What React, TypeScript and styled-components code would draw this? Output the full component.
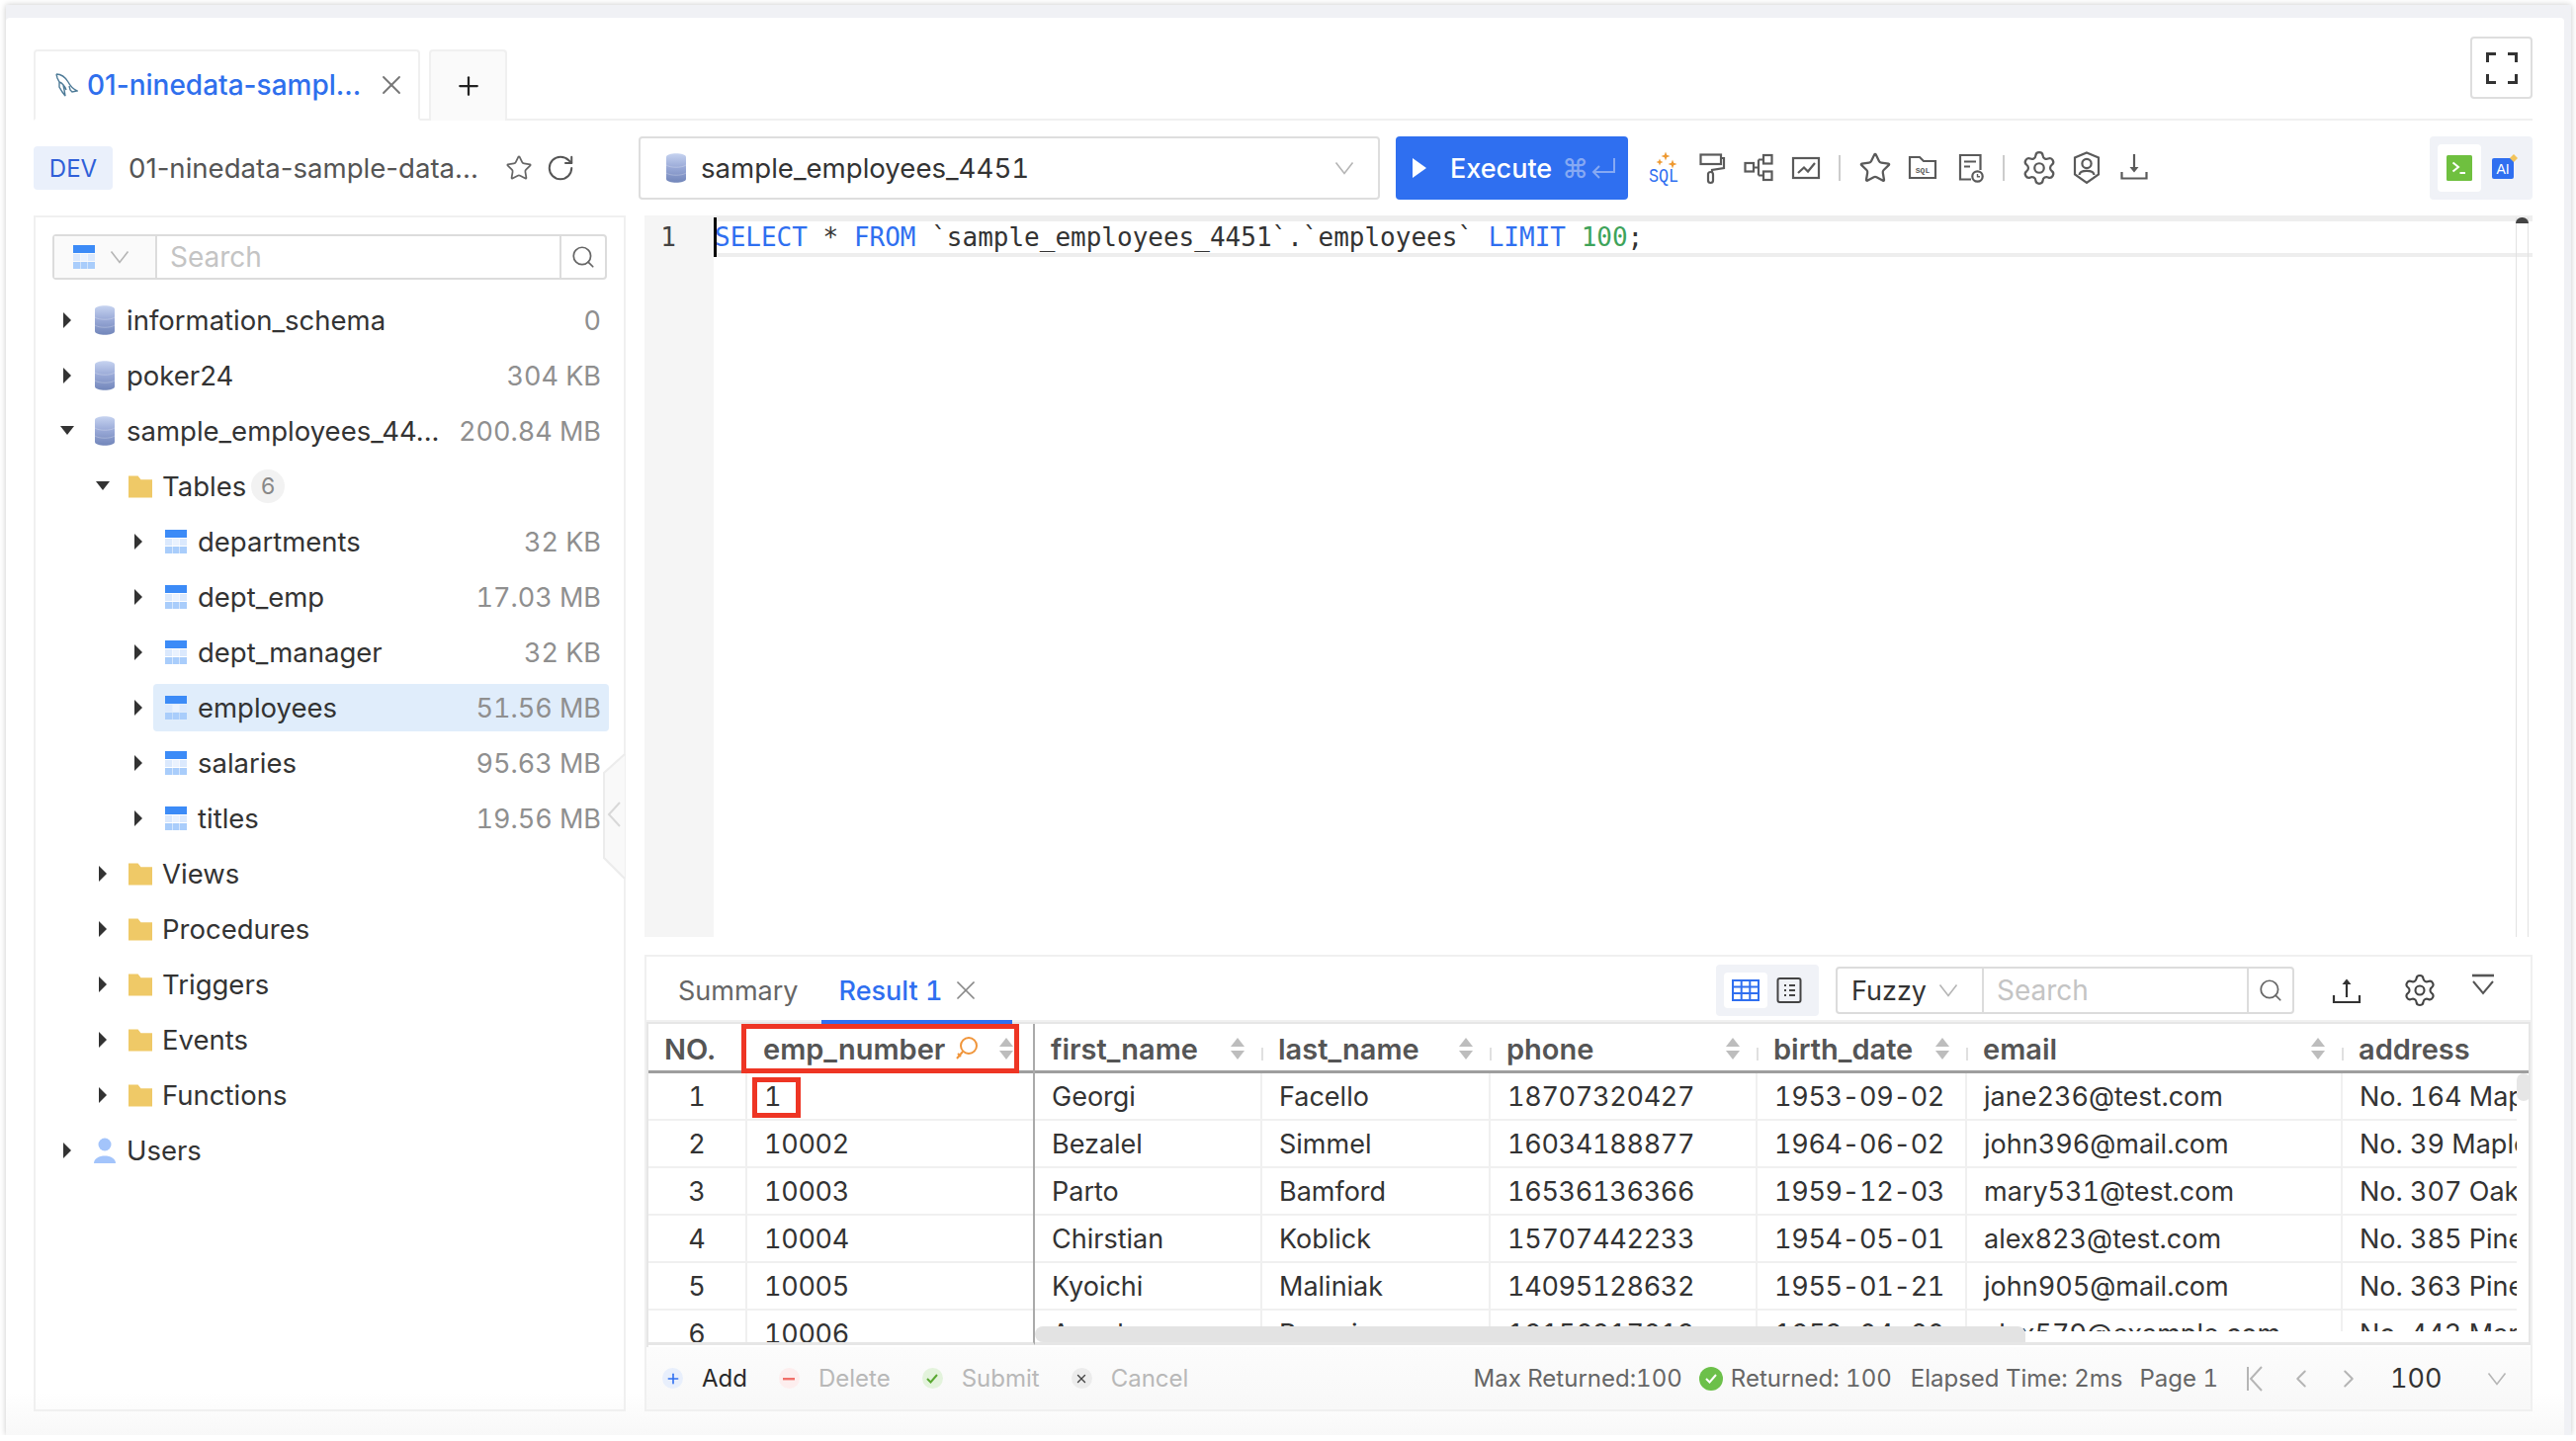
import React, { FC } from "react";
import styled, { createGlobalStyle } from "styled-components";
import { Settings, Star, RotateCw, Search, X, Plus, ChevronLeft, ChevronRight } from "lucide-react";

const GlobalStyle = createGlobalStyle`
  html, body {
    margin: 0;
    padding: 0;
    background: #ffffff;
    font-family: "Inter", "Noto Sans", sans-serif;
    color: #333333;
    overflow: hidden;
  }
  * { box-sizing: border-box; }
`;

const Frame = styled.div`
  margin: 5px 5px 0 6px;
  height: 1447px;
  padding: 13px 7px 0 0;
  background: #f0f1f5;
  box-shadow: 0 0 6px rgba(0, 0, 0, 0.22);
`;

const Sheet = styled.div`
  height: 100%;
  padding: 20px 32px 0 28px;
  border-radius: 4px 4px 0 0;
  background: linear-gradient(180deg, #ffffff 97%, #f8f8f8 100%);
  display: flex;
  flex-direction: column;
`;

const TabBar = styled.div`
  height: 84px;
  display: flex;
  align-items: flex-end;
  border-bottom: 2px solid #f0f0f0;
  position: relative;
`;

const Tab = styled.div`
  width: 391px;
  height: 72px;
  margin-bottom: -2px;
  padding: 0 11px 0 19px;
  display: flex;
  align-items: center;
  border: 2px solid #f0f0f0;
  border-bottom: 2px solid #ffffff;
  border-radius: 4px 4px 0 0;
  background: #ffffff;
`;

const TabTitle = styled.span`
  flex: 1;
  margin-left: 9px;
  font-size: 28px;
  font-weight: 500;
  color: #2f6fed;
  white-space: nowrap;
`;

const AddTab = styled.div`
  width: 79px;
  height: 72px;
  margin-left: 9px;
  margin-bottom: -2px;
  display: flex;
  align-items: center;
  justify-content: center;
  border: 2px solid #f0f0f0;
  border-bottom: none;
  border-radius: 4px 4px 0 0;
  background: #fafafa;
  color: #222222;
`;

const FullscreenButton = styled.div`
  margin-left: auto;
  margin-bottom: 20px;
  width: 63px;
  height: 63px;
  display: flex;
  align-items: center;
  justify-content: center;
  border: 2px solid #dedede;
  border-radius: 4px;
`;

const Body = styled.div`
  flex: 1;
  min-height: 0;
  display: flex;
  gap: 19px;
`;

const LeftColumn = styled.div`
  width: 599px;
  display: flex;
  flex-direction: column;
`;

const RightColumn = styled.div`
  flex: 1;
  min-width: 0;
  display: flex;
  flex-direction: column;
`;

const ConnectionRow = styled.div`
  height: 44px;
  margin: 26px 0;
  display: flex;
  align-items: center;
  color: #5c5c5c;
`;

const EnvBadge = styled.span`
  width: 80px;
  height: 44px;
  display: flex;
  align-items: center;
  justify-content: center;
  border-radius: 4px;
  background: #eaf0fb;
  color: #2f5fd8;
  font-size: 24px;
`;

const ConnectionName = styled.span`
  margin-left: 16px;
  width: 381px;
  font-size: 27.6px;
  color: #555555;
  white-space: nowrap;
`;

const ConnectionGap = styled.span`
  width: 13px;
`;

const TreePanel = styled.div`
  flex: none;
  height: 1210px;
  position: relative;
  padding: 17px 18px 0 17px;
  border: 2px solid #f0f0f0;
`;

const SearchGroup = styled.div<{ $width?: string }>`
  height: 46px;
  display: flex;
  align-items: stretch;
  border: 2px solid #dcdcdc;
  border-radius: 4px;
  width: ${(p) => p.$width || "561px"};
`;

const TypeSelect = styled.div`
  width: 104px;
  display: flex;
  align-items: center;
  padding-left: 19px;
  gap: 15px;
  background: #fafafa;
  border-right: 2px solid #dcdcdc;
`;

const SearchInput = styled.div`
  flex: 1;
  display: flex;
  align-items: center;
  padding-left: 13px;
  font-size: 28px;
  color: #c4c4c4;
`;

const SearchButton = styled.div<{ $width: number }>`
  width: ${(p) => p.$width}px;
  display: flex;
  align-items: center;
  justify-content: center;
  border-left: 2px solid #dcdcdc;
  color: #666666;
`;

const Tree = styled.div`
  margin: 13px -18px 0 -17px;
  padding-right: 15px;
`;

const Row = styled.div<{ $level: number }>`
  height: 56px;
  display: flex;
  align-items: center;
  padding-left: ${(p) => 26 + p.$level * 36}px;
`;

const RowBody = styled.div<{ $selected?: boolean }>`
  flex: 1;
  min-width: 0;
  height: 48px;
  margin-left: 9px;
  padding: 0 8px 0 11px;
  display: flex;
  align-items: center;
  border-radius: 4px;
  background: ${(p) => (p.$selected ? "#e0edfb" : "transparent")};
`;

const RowIcon = styled.span`
  width: 24px;
  height: 28px;
  display: flex;
  align-items: center;
  justify-content: center;
  flex: none;
`;

const RowLabel = styled.span`
  margin-left: 10px;
  font-size: 27.5px;
  color: #333333;
  white-space: nowrap;
`;

const RowSize = styled.span`
  margin-left: auto;
  font-size: 27px;
  font-variant-numeric: tabular-nums;
  color: #8f8f8f;
  white-space: nowrap;
`;

const CountBadge = styled.span`
  margin-left: 5px;
  width: 34px;
  height: 34px;
  display: flex;
  align-items: center;
  justify-content: center;
  border-radius: 50%;
  background: #f2f2f2;
  color: #888888;
  font-size: 23px;
`;

const CollapseHandle = styled.svg`
  position: absolute;
  top: 542px;
  right: -2px;
`;

const ArrowOpen = styled.svg`
  flex: none;
  margin: 0 -1px;
`;

const ArrowClosed = styled.svg`
  flex: none;
`;

const Toolbar = styled.div`
  height: 64px;
  margin: 16px 0;
  display: flex;
  align-items: center;
`;

const DbSelect = styled.div`
  width: 750px;
  height: 64px;
  margin-left: -6px;
  padding: 0 24px 0 26px;
  display: flex;
  align-items: center;
  border: 2px solid #dedede;
  border-radius: 4px;
  font-size: 27.6px;
  font-variant-numeric: tabular-nums;
  color: #333333;
`;

const DbName = styled.span`
  margin-left: 15px;
  flex: 1;
`;

const ExecuteButton = styled.div`
  width: 235px;
  height: 64px;
  margin-left: 16px;
  padding-left: 17px;
  display: flex;
  align-items: center;
  border-radius: 4px;
  background: #2f6ff0;
  color: #ffffff;
  font-size: 27px;
  font-weight: 500;
`;

const ExecuteLabel = styled.span`
  margin-left: 24px;
`;

const ExecuteHint = styled.span`
  margin-left: 10px;
  color: #86a9f3;
  font-size: 27px;
  display: flex;
  align-items: center;
  gap: 2px;
`;

const ToolButton = styled.span`
  width: 48px;
  height: 48px;
  display: flex;
  align-items: center;
  justify-content: center;
  flex: none;
  color: #5a5a5a;
`;

const ToolGap = styled.span`
  width: 12px;
`;

const ToolDivider = styled.span`
  width: 2px;
  height: 26px;
  margin: 0 11px 0 9px;
  background: #cccccc;
`;

const Switcher = styled.div<{ $small?: boolean }>`
  margin-left: auto;
  width: 104px;
  height: ${(p) => (p.$small ? 52 : 64)}px;
  padding: 8px;
  display: flex;
  align-items: stretch;
  border-radius: 4px;
  background: #f0f2f7;
`;

const SwitchOption = styled.span<{ $active?: boolean }>`
  width: 44px;
  display: flex;
  align-items: center;
  justify-content: center;
  border-radius: 4px;
  background: ${(p) => (p.$active ? "#ffffff" : "transparent")};
`;

const AiSvg = styled.svg`
  margin-left: 6px;
  flex: none;
`;

const Editor = styled.div`
  height: 730px;
  display: flex;
  position: relative;
  font-family: "DejaVu Sans Mono", "Liberation Mono", monospace;
  font-size: 26px;
`;

const Gutter = styled.div`
  width: 70px;
  background: #f5f5f5;
  padding: 7px 38px 0 0;
  height: 100%;
  text-align: right;
  color: #444444;
  line-height: 30px;
  flex: none;
`;

const ActiveLine = styled.div`
  flex: 1;
  height: 42px;
  padding-left: 1px;
  display: flex;
  align-items: center;
  border-top: 6px solid #eeeeee;
  border-bottom: 4px solid #eeeeee;
  color: #333333;
`;

const CodeText = styled.span`
  white-space: pre;
`;

const Keyword = styled.span`
  color: #2f6ff0;
`;

const NumberToken = styled.span`
  color: #3ea35a;
`;

const Caret = styled.span`
  position: absolute;
  left: 70px;
  top: 2px;
  width: 3px;
  height: 40px;
  background: #000000;
`;

const EditorTrack = styled.div`
  position: absolute;
  top: 2px;
  bottom: 0;
  right: 4px;
  width: 13px;
  border: solid #e2e2e2;
  border-width: 0 1px;
  &::before {
    content: "";
    display: block;
    margin: 0 -1px;
    height: 6px;
    border-radius: 7px 7px 0 0;
    background: #444444;
  }
`;

const Results = styled.div`
  height: 462px;
  margin-top: 18px;
  display: flex;
  flex-direction: column;
  border: 2px solid #f0f0f0;
`;

const ResultBar = styled.div`
  height: 66px;
  display: flex;
  align-items: center;
  padding-left: 32px;
  border-bottom: 2px solid #f0f0f0;
  flex: none;
`;

const ResultTab = styled.span<{ $active?: boolean }>`
  position: relative;
  height: 64px;
  padding-top: 4px;
  display: flex;
  align-items: center;
  font-size: 27px;
  font-variant-numeric: tabular-nums;
  font-weight: ${(p) => (p.$active ? 500 : 400)};
  color: ${(p) => (p.$active ? "#2f6ff0" : "#666666")};
`;

const ResultUnderline = styled.span`
  position: absolute;
  left: -18px;
  bottom: -4px;
  width: 193px;
  height: 4px;
  background: #2f6ff0;
`;

const ResultTabs = styled.div`
  display: flex;
  align-items: center;
  gap: 41px;
`;

const CloseGlyph = styled.span`
  margin-left: 8px;
  display: flex;
  color: #888888;
`;

const ResultTools = styled.div`
  margin-left: auto;
  margin-top: 4px;
  padding-right: 30px;
  display: flex;
  align-items: center;
`;

const ToolsSearch = styled(SearchGroup)`
  margin-left: 17px;
  height: 48px;
`;

const FuzzySelect = styled.div`
  width: 148px;
  padding: 0 24px 0 14px;
  display: flex;
  align-items: center;
  justify-content: space-between;
  font-size: 27px;
  color: #333333;
  border-right: 2px solid #dcdcdc;
`;

const ToolsIcon = styled.span<{ $gap: number; $raise?: boolean }>`
  margin-left: ${(p) => p.$gap}px;
  margin-bottom: ${(p) => (p.$raise ? 8 : 0)}px;
  width: 36px;
  height: 36px;
  display: flex;
  align-items: center;
  justify-content: center;
  color: #444444;
`;

const TableWrap = styled.div`
  flex: 1;
  min-height: 0;
  display: flex;
  border-top: 2px solid #e6e6e6;
  border-left: 2px solid #e6e6e6;
`;

const FixedPane = styled.div`
  width: 391px;
  flex: none;
  height: 325px;
  overflow: hidden;
  border-right: 2px solid #aaaaaa;
  border-bottom: 3px solid #e6e6e6;
`;

const ScrollPane = styled.div`
  flex: 1;
  min-width: 0;
  height: 325px;
  position: relative;
  border-right: 2px solid #e6e6e6;
  border-bottom: 3px solid #e6e6e6;
`;

const ScrollBody = styled.div`
  height: 311px;
  overflow: hidden;
`;

const HeaderRow = styled.div<{ $columns: string }>`
  height: 50px;
  display: grid;
  grid-template-columns: ${(p) => p.$columns};
  border-bottom: 3px solid #9e9e9e;
`;

const DataRow = styled.div<{ $columns: string; $clip?: boolean }>`
  height: 48px;
  display: grid;
  grid-template-columns: ${(p) => p.$columns};
  border-bottom: 2px solid #f0f0f0;
  margin-right: ${(p) => (p.$clip ? 12 : 0)}px;
`;

const HeadCell = styled.div<{ $padRight?: number }>`
  position: relative;
  display: flex;
  align-items: center;
  padding: 3px ${(p) => p.$padRight ?? 18}px 0 16px;
  font-size: 29px;
  font-weight: 600;
  color: #555555;
  white-space: nowrap;
`;

const HeadName = styled.span`
  flex: 1;
`;

const HeadTick = styled.span`
  position: absolute;
  right: -1px;
  top: 24px;
  width: 2px;
  height: 13px;
  background: #e0e0e0;
`;

const Cell = styled.div<{ $center?: boolean; $tight?: boolean }>`
  position: relative;
  display: flex;
  align-items: center;
  justify-content: ${(p) => (p.$center ? "center" : "flex-start")};
  padding: 0 ${(p) => (p.$center ? 0 : 17)}px;
  font-size: 27px;
  font-variant-numeric: tabular-nums;
  letter-spacing: ${(p) => (p.$tight ? "-0.3px" : "normal")};
  color: #333333;
  border-right: 2px solid #f0f0f0;
  white-space: nowrap;
  overflow: hidden;
  &:last-child {
    border-right: none;
  }
`;

const AnnotatedCell = styled(Cell)`
  overflow: visible;
`;

const HeadBox = styled.span`
  position: absolute;
  left: -6px;
  right: 14px;
  top: 0;
  bottom: -3px;
  border: 5px solid #ee3524;
`;

const CellBox = styled.span`
  position: absolute;
  left: 5px;
  top: 4px;
  width: 49px;
  height: 41px;
  border: 5px solid #ee3524;
`;

const HScrollBar = styled.div`
  position: absolute;
  left: 0;
  bottom: 0;
  width: 1002px;
  height: 16px;
  border-radius: 8px 8px 0 8px;
  background: #e3e3e3;
`;

const VScrollBar = styled.div`
  position: absolute;
  right: -2px;
  top: 50px;
  width: 14px;
  height: 28px;
  border-radius: 7px;
  background: #e6e6e6;
`;

const Footer = styled.div`
  height: 63px;
  display: flex;
  align-items: center;
  flex: none;
  padding: 0 24px 0 16px;
  background: linear-gradient(180deg, #fcfcfc, #f8f8f8);
  font-size: 24px;
`;

const Actions = styled.div`
  display: flex;
  align-items: center;
  gap: 32px;
`;

const Action = styled.span<{ $disabled?: boolean }>`
  display: flex;
  align-items: center;
  gap: 19px;
  color: ${(p) => (p.$disabled ? "#b8b8b8" : "#2a2a2a")};
`;

const ActionDot = styled.span<{ $bg: string; $fg: string }>`
  width: 21px;
  height: 21px;
  display: flex;
  align-items: center;
  justify-content: center;
  border-radius: 50%;
  background: ${(p) => p.$bg};
  color: ${(p) => p.$fg};
`;

const Stats = styled.div`
  margin-left: auto;
  display: flex;
  align-items: center;
  color: #666666;
  font-size: 24px;
  font-variant-numeric: tabular-nums;
  white-space: nowrap;
`;

const StatText = styled.span<{ $gap: number }>`
  margin-left: ${(p) => p.$gap}px;
`;

const OkDot = styled.span`
  margin-left: 17px;
  width: 24px;
  height: 24px;
  display: flex;
  align-items: center;
  justify-content: center;
  border-radius: 50%;
  background: #6cc04a;
`;

const PageNav = styled.span<{ $gap: number }>`
  margin-left: ${(p) => p.$gap}px;
  display: flex;
  color: #b5b5b5;
`;

const PageSize = styled.span`
  margin-left: 27px;
  width: 98px;
  font-size: 27px;
  color: #333333;
`;

const SortSvg = styled.svg`
  flex: none;
`;

const ColumnSearchSvg = styled.svg`
  flex: none;
  margin-right: 21px;
`;

const Chevron: FC<{ size?: number; color?: string }> = ({ size = 20, color = "#b5b5b5" }) => (
  <svg width={size} height={size * 0.7} viewBox="0 0 20 14" fill="none">
    <path d="M1.5 1.5 L10 12.5 L18.5 1.5" stroke={color} strokeWidth="1.6" />
  </svg>
);

const TreeArrow: FC<{ open?: boolean }> = ({ open }) =>
  open ? (
    <ArrowOpen width="14" height="12" viewBox="0 0 14 12">
      <path d="M0 1 H14 L7 10 Z" fill="#333" />
    </ArrowOpen>
  ) : (
    <ArrowClosed width="12" height="16" viewBox="0 0 12 16">
      <path d="M2 0 L10 8 L2 16 Z" fill="#333" />
    </ArrowClosed>
  );

const DbIcon: FC = () => (
  <svg width="20" height="30" viewBox="0 0 20 30">
    <defs>
      <linearGradient id="dbfill" x1="0" y1="0" x2="0" y2="1">
        <stop offset="0" stopColor="#c6d3f0" />
        <stop offset="0.5" stopColor="#98a8d6" />
        <stop offset="1" stopColor="#7286ba" />
      </linearGradient>
    </defs>
    <path d="M0 4 C0 -1 20 -1 20 4 V26 C20 31 0 31 0 26 Z" fill="url(#dbfill)" />
    <path d="M0 12 C4 15 16 15 20 12 M0 20 C4 23 16 23 20 20" stroke="#ffffff" strokeOpacity="0.25" fill="none" />
  </svg>
);

const TableIcon: FC = () => (
  <svg width="22" height="26" viewBox="0 0 22 26">
    <rect x="0" y="1" width="22" height="8" fill="#3c8bf7" />
    <rect x="0" y="10" width="7" height="7" fill="#dbe9fd" />
    <rect x="7.5" y="10" width="7" height="7" fill="#eaf2fe" />
    <rect x="15" y="10" width="7" height="7" fill="#dbe9fd" />
    <rect x="0" y="18" width="7" height="7" fill="#a9cdfb" />
    <rect x="7.5" y="18" width="7" height="7" fill="#a9cdfb" />
    <rect x="15" y="18" width="7" height="7" fill="#a9cdfb" />
  </svg>
);

const FolderIcon: FC = () => (
  <svg width="25" height="23" viewBox="0 0 25 23">
    <path d="M0 0 H10 L13 4 H25 V23 H0 Z" fill="#efc967" />
  </svg>
);

const UserIcon: FC = () => (
  <svg width="22" height="26" viewBox="0 0 22 26">
    <circle cx="11" cy="7" r="6.5" fill="#a3c4fb" />
    <path d="M0 26 C0 16 22 16 22 26 Z" fill="#a3c4fb" />
  </svg>
);

const Dolphin: FC = () => (
  <svg width="24" height="24" viewBox="0 0 24 24" fill="none" stroke="#4d7a97" strokeWidth="1.4">
    <path d="M2 1 C7 1 11 4 14 9 C16 13 19 16 23 18 L18 19 L16 17 L15 13 M2 1 L3 5 L5 9 L5 14 L8 19 L11 23 L10 17 L9 12 M5 9 C8 10 10 12 12 17" />
  </svg>
);

const SqlSparkIcon: FC = () => (
  <svg width="36" height="36" viewBox="0 0 36 36">
    <g fill="#ee9a33">
      <path d="M20 1.5 l1.2 3.3 3.3 1.2 -3.3 1.2 -1.2 3.3 -1.2 -3.3 -3.3 -1.2 3.3 -1.2 z" />
      <path d="M14 8.5 l1 2.5 2.5 1 -2.5 1 -1 2.5 -1 -2.5 -2.5 -1 2.5 -1 z" />
      <path d="M27 9.5 l1.2 3.3 3.3 1.2 -3.3 1.2 -1.2 3.3 -1.2 -3.3 -3.3 -1.2 3.3 -1.2 z" />
    </g>
    <text x="3" y="32" textLength="30" lengthAdjust="spacingAndGlyphs" fontFamily="'Liberation Mono', monospace" fontSize="20" fill="#2f6ff0">SQL</text>
  </svg>
);

const RollerIcon: FC = () => (
  <svg width="36" height="36" viewBox="0 0 36 36" fill="none" stroke="#5a5a5a" strokeWidth="2.2">
    <rect x="7.5" y="4.5" width="20.5" height="9.5" />
    <path d="M28 8 H31 V18 L19 20 V22" />
    <rect x="15" y="22" width="5" height="11" rx="2.5" />
  </svg>
);

const TreeIcon: FC = () => (
  <svg width="36" height="36" viewBox="0 0 36 36" fill="none" stroke="#5a5a5a" strokeWidth="2.2">
    <rect x="4.5" y="13" width="8.5" height="8.5" />
    <rect x="23" y="5" width="8.5" height="8.5" />
    <rect x="23" y="21.5" width="8.5" height="8.5" />
    <path d="M13 17.5 H18 M18 9.5 V25.5 M18 9.5 H23 M18 25.5 H23" />
  </svg>
);

const ChartIcon: FC = () => (
  <svg width="36" height="36" viewBox="0 0 36 36" fill="none" stroke="#5a5a5a" strokeWidth="2.2">
    <rect x="5" y="8" width="26" height="20" />
    <path d="M10 23 L16 17.5 L20 21.5 L27 13" />
  </svg>
);

const SqlFolderIcon: FC = () => (
  <svg width="36" height="36" viewBox="0 0 36 36" fill="none" stroke="#5a5a5a" strokeWidth="2.2">
    <path d="M5 7 H15 L19 11 H31 V28 H5 Z" />
    <text x="18" y="23" textAnchor="middle" fontFamily="'Liberation Mono', monospace" fontWeight="700" fontSize="8" stroke="none" fill="#5a5a5a">SQL</text>
  </svg>
);

const FileClockIcon: FC = () => (
  <svg width="36" height="36" viewBox="0 0 36 36" fill="none" stroke="#5a5a5a" strokeWidth="2.2">
    <path d="M19 29.5 H8 V5 H28.5 V20" />
    <path d="M12 11.5 H24 M12 16.5 H18" />
    <circle cx="25.5" cy="26.5" r="5.2" />
    <path d="M25.5 24 V26.7 H28" strokeWidth="1.4" />
  </svg>
);

const ShieldIcon: FC = () => (
  <svg width="36" height="36" viewBox="0 0 36 36" fill="none" stroke="#5a5a5a" strokeWidth="2.2">
    <path d="M18 2.5 L30 7.5 V24.5 L18 33 L6 24.5 V7.5 Z" />
    <circle cx="18" cy="13.5" r="4.6" />
    <path d="M10.5 25 C11 19.5 25 19.5 25.5 25" />
  </svg>
);

const DownloadIcon: FC = () => (
  <svg width="36" height="36" viewBox="0 0 36 36" fill="none" stroke="#5a5a5a" strokeWidth="2.2">
    <path d="M18 4 V19" />
    <path d="M13.5 17 H22.5 L18 22.5 Z" fill="#5a5a5a" stroke="none" />
    <path d="M5.5 22 V28.5 H30.5 V22" />
  </svg>
);

const UploadIcon: FC = () => (
  <svg width="30" height="30" viewBox="0 0 30 30" fill="none" stroke="#333" strokeWidth="2.2">
    <path d="M15 6 V22" />
    <path d="M10.5 9 H19.5 L15 3.5 Z" fill="#333" stroke="none" />
    <path d="M2 20 V27 H28 V20" />
  </svg>
);

const TerminalIcon: FC = () => (
  <svg width="26" height="26" viewBox="0 0 26 26">
    <rect width="26" height="26" rx="1.5" fill="#6fc03f" />
    <path d="M6.5 7.5 L12 12 L6.5 16.5" stroke="#fff" strokeWidth="2" fill="none" />
    <path d="M13.5 18 H19" stroke="#fff" strokeWidth="2" />
  </svg>
);

const AiIcon: FC = () => (
  <AiSvg width="28" height="28" viewBox="0 0 28 28">
    <rect x="0" y="4" width="22" height="21" rx="2" fill="#2f6ff0" />
    <text x="11" y="20" textAnchor="middle" fontFamily="'Liberation Sans', sans-serif" fontSize="14" fill="#fff">AI</text>
    <path d="M22 0 L26 4 L22 8 L18 4 Z" fill="#f2c35a" />
  </AiSvg>
);

const SortArrows: FC = () => (
  <SortSvg width="14" height="22" viewBox="0 0 14 22">
    <path d="M7 0 L14 9 H0 Z" fill="#bdbdbd" />
    <path d="M7 22 L14 13 H0 Z" fill="#bdbdbd" />
  </SortSvg>
);

const ColumnSearch: FC = () => (
  <ColumnSearchSvg width="24" height="26" viewBox="0 0 24 26" fill="none" stroke="#f0953a" strokeWidth="2">
    <circle cx="14" cy="10" r="8" />
    <path d="M8 16 L2 23 M3 18 L6 21" />
  </ColumnSearchSvg>
);

const FullscreenIcon: FC = () => (
  <svg width="32" height="32" viewBox="0 0 32 32" fill="none" stroke="#333" strokeWidth="3">
    <path d="M1.5 10 V1.5 H10 M22 1.5 H30.5 V10 M1.5 22 V30.5 H10 M22 30.5 H30.5 V22" />
  </svg>
);

const CollapseIcon: FC = () => (
  <svg width="28" height="26" viewBox="0 0 28 26" fill="none" stroke="#555" strokeWidth="2">
    <path d="M3 2 H25" strokeWidth="2.6" />
    <path d="M4 8 L14 20 L24 8" />
  </svg>
);

const FirstPage: FC = () => (
  <svg width="22" height="30" viewBox="0 0 22 30" fill="none" stroke="#b5b5b5" strokeWidth="2">
    <path d="M4 3 V27 M18 3 L7 15 L18 27" />
  </svg>
);

const GridIcon: FC = () => (
  <svg width="28" height="22" viewBox="0 0 28 22" fill="none" stroke="#2f6ff0" strokeWidth="2">
    <rect x="1" y="1" width="26" height="20" />
    <path d="M1 7.5 H27 M1 14 H27 M9.7 1 V21 M18.3 1 V21" />
  </svg>
);

const FormIcon: FC = () => (
  <svg width="26" height="26" viewBox="0 0 26 26" fill="none" stroke="#444" strokeWidth="2">
    <rect x="1.5" y="1" width="23" height="24" rx="2" />
    <path d="M8 8 H10 M13 8 H19 M8 13 H10 M13 13 H19 M8 18 H10 M13 18 H19" />
  </svg>
);

interface TreeItem {
  level: number;
  label: string;
  kind: "db" | "folder" | "table" | "user";
  size?: string;
  open?: boolean;
  count?: string;
  selected?: boolean;
}

const treeItems: TreeItem[] = [
  { level: 0, label: "information_schema", kind: "db", size: "0" },
  { level: 0, label: "poker24", kind: "db", size: "304 KB" },
  { level: 0, label: "sample_employees_44...", kind: "db", size: "200.84 MB", open: true },
  { level: 1, label: "Tables", kind: "folder", open: true, count: "6" },
  { level: 2, label: "departments", kind: "table", size: "32 KB" },
  { level: 2, label: "dept_emp", kind: "table", size: "17.03 MB" },
  { level: 2, label: "dept_manager", kind: "table", size: "32 KB" },
  { level: 2, label: "employees", kind: "table", size: "51.56 MB", selected: true },
  { level: 2, label: "salaries", kind: "table", size: "95.63 MB" },
  { level: 2, label: "titles", kind: "table", size: "19.56 MB" },
  { level: 1, label: "Views", kind: "folder" },
  { level: 1, label: "Procedures", kind: "folder" },
  { level: 1, label: "Triggers", kind: "folder" },
  { level: 1, label: "Events", kind: "folder" },
  { level: 1, label: "Functions", kind: "folder" },
  { level: 0, label: "Users", kind: "user" },
];

const kindIcons = {
  db: <DbIcon />,
  folder: <FolderIcon />,
  table: <TableIcon />,
  user: <UserIcon />,
};

const FIXED_COLUMNS = "100px 289px";
const SCROLL_COLUMNS = "230px 231px 270px 212px 380px 1fr";

const fixedRows = [
  ["1", "1"],
  ["2", "10002"],
  ["3", "10003"],
  ["4", "10004"],
  ["5", "10005"],
  ["6", "10006"],
];

const scrollHeads = ["first_name", "last_name", "phone", "birth_date", "email", "address"];

const scrollRows = [
  ["Georgi", "Facello", "18707320427", "1953-09-02", "jane236@test.com", "No. 164 Maple Street"],
  ["Bezalel", "Simmel", "16034188877", "1964-06-02", "john396@mail.com", "No. 39 Maple Street"],
  ["Parto", "Bamford", "16536136366", "1959-12-03", "mary531@test.com", "No. 307 Oak Street"],
  ["Chirstian", "Koblick", "15707442233", "1954-05-01", "alex823@test.com", "No. 385 Pine Street"],
  ["Kyoichi", "Maliniak", "14095128632", "1955-01-21", "john905@mail.com", "No. 363 Pine Street"],
  ["Anneke", "Preusig", "19156317213", "1953-04-20", "alex579@example.com", "No. 443 Maple Street"],
];

const App: FC = () => {
  return (
    <>
      <GlobalStyle />
      <Frame>
        <Sheet>
          <TabBar>
            <Tab>
              <Dolphin />
              <TabTitle>01-ninedata-sampl...</TabTitle>
              <X size={32} color="#777" strokeWidth={1.4} />
            </Tab>
            <AddTab>
              <Plus size={30} strokeWidth={1.8} />
            </AddTab>
            <FullscreenButton>
              <FullscreenIcon />
            </FullscreenButton>
          </TabBar>
          <Body>
            <LeftColumn>
              <ConnectionRow>
                <EnvBadge>DEV</EnvBadge>
                <ConnectionName>01-ninedata-sample-data...</ConnectionName>
                <Star size={28} strokeWidth={1.5} color="#666" />
                <ConnectionGap />
                <RotateCw size={30} strokeWidth={1.6} color="#555" />
              </ConnectionRow>
              <TreePanel>
                <SearchGroup>
                  <TypeSelect>
                    <TableIcon />
                    <Chevron />
                  </TypeSelect>
                  <SearchInput>Search</SearchInput>
                  <SearchButton $width={46}>
                    <Search size={26} strokeWidth={1.6} />
                  </SearchButton>
                </SearchGroup>
                <Tree>
                  {treeItems.map((item) => (
                    <Row key={item.label} $level={item.level}>
                      <TreeArrow open={item.open} />
                      <RowBody $selected={item.selected}>
                        <RowIcon>{kindIcons[item.kind]}</RowIcon>
                        <RowLabel>{item.label}</RowLabel>
                        {item.count && <CountBadge>{item.count}</CountBadge>}
                        {item.size && <RowSize>{item.size}</RowSize>}
                      </RowBody>
                    </Row>
                  ))}
                </Tree>
                <CollapseHandle width="24" height="128" viewBox="0 0 24 128">
                  <path d="M23 1 L2 20 V106 L23 127" fill="#f9f9f9" stroke="#ececec" strokeWidth="2" />
                  <path d="M18 50 L7 62 L18 74" fill="none" stroke="#d8d8d8" strokeWidth="2" />
                </CollapseHandle>
              </TreePanel>
            </LeftColumn>
            <RightColumn>
              <Toolbar>
                <DbSelect>
                  <DbIcon />
                  <DbName>sample_employees_4451</DbName>
                  <Chevron />
                </DbSelect>
                <ExecuteButton>
                  <svg width="14" height="20" viewBox="0 0 14 20">
                    <path d="M0 0 L14 10 L0 20 Z" fill="#fff" />
                  </svg>
                  <ExecuteLabel>Execute</ExecuteLabel>
                  <ExecuteHint>
                    ⌘
                    <svg width="26" height="22" viewBox="0 0 26 22" fill="none" stroke="#86a9f3" strokeWidth="2">
                      <path d="M24 1 V15 H3 M9 9 L3 15 L9 21" />
                    </svg>
                  </ExecuteHint>
                </ExecuteButton>
                <ToolGap />
                <ToolButton><SqlSparkIcon /></ToolButton>
                <ToolButton><RollerIcon /></ToolButton>
                <ToolButton><TreeIcon /></ToolButton>
                <ToolButton><ChartIcon /></ToolButton>
                <ToolDivider />
                <ToolButton><Star size={34} strokeWidth={1.6} /></ToolButton>
                <ToolButton><SqlFolderIcon /></ToolButton>
                <ToolButton><FileClockIcon /></ToolButton>
                <ToolDivider />
                <ToolButton><Settings size={38} strokeWidth={1.4} /></ToolButton>
                <ToolButton><ShieldIcon /></ToolButton>
                <ToolButton><DownloadIcon /></ToolButton>
                <Switcher>
                  <SwitchOption $active><TerminalIcon /></SwitchOption>
                  <SwitchOption><AiIcon /></SwitchOption>
                </Switcher>
              </Toolbar>
              <Editor>
                <Gutter>1</Gutter>
                <ActiveLine>
                  <CodeText>
                    <Keyword>SELECT</Keyword> * <Keyword>FROM</Keyword> `sample_employees_4451`.`employees` <Keyword>LIMIT</Keyword> <NumberToken>100</NumberToken>;
                  </CodeText>
                </ActiveLine>
                <Caret />
                <EditorTrack />
              </Editor>
              <Results>
                <ResultBar>
                  <ResultTabs>
                    <ResultTab>Summary</ResultTab>
                    <ResultTab $active>
                      Result 1
                      <CloseGlyph><X size={32} strokeWidth={1.3} /></CloseGlyph>
                      <ResultUnderline />
                    </ResultTab>
                  </ResultTabs>
                  <ResultTools>
                    <Switcher $small>
                      <SwitchOption $active><GridIcon /></SwitchOption>
                      <SwitchOption><FormIcon /></SwitchOption>
                    </Switcher>
                    <ToolsSearch $width="464px">
                      <FuzzySelect>
                        Fuzzy
                        <Chevron />
                      </FuzzySelect>
                      <SearchInput>Search</SearchInput>
                      <SearchButton $width={46}>
                        <Search size={26} strokeWidth={1.6} />
                      </SearchButton>
                    </ToolsSearch>
                    <ToolsIcon $gap={35}><UploadIcon /></ToolsIcon>
                    <ToolsIcon $gap={38}><Settings size={36} strokeWidth={1.4} /></ToolsIcon>
                    <ToolsIcon $gap={28} $raise><CollapseIcon /></ToolsIcon>
                  </ResultTools>
                </ResultBar>
                <TableWrap>
                  <FixedPane>
                    <HeaderRow $columns={FIXED_COLUMNS}>
                      <HeadCell>NO.</HeadCell>
                      <HeadCell $padRight={20}>
                        <HeadName>emp_number</HeadName>
                        <ColumnSearch />
                        <SortArrows />
                        <HeadBox />
                      </HeadCell>
                    </HeaderRow>
                    {fixedRows.map((row, i) => (
                      <DataRow key={row[0]} $columns={FIXED_COLUMNS}>
                        <Cell $center>{row[0]}</Cell>
                        <AnnotatedCell $tight>
                          {row[1]}
                          {i === 0 && <CellBox />}
                        </AnnotatedCell>
                      </DataRow>
                    ))}
                  </FixedPane>
                  <ScrollPane>
                    <ScrollBody>
                      <HeaderRow $columns={SCROLL_COLUMNS}>
                        {scrollHeads.map((name) => (
                          <HeadCell key={name}>
                            <HeadName>{name}</HeadName>
                            {name !== "address" && <SortArrows />}
                            {name !== "address" && <HeadTick />}
                          </HeadCell>
                        ))}
                      </HeaderRow>
                      {scrollRows.map((row) => (
                        <DataRow key={row[0]} $columns={SCROLL_COLUMNS} $clip>
                          {row.map((value, i) => (
                            <Cell key={i} $tight={i === 2 || i === 3}>{value}</Cell>
                          ))}
                        </DataRow>
                      ))}
                    </ScrollBody>
                    <HScrollBar />
                    <VScrollBar />
                  </ScrollPane>
                </TableWrap>
                <Footer>
                  <Actions>
                    <Action>
                      <ActionDot $bg="#e8effc" $fg="#2f6ff0"><Plus size={16} strokeWidth={2.4} /></ActionDot>
                      Add
                    </Action>
                    <Action $disabled>
                      <ActionDot $bg="#fdeeee" $fg="#f0706a">
                        <svg width="12" height="4" viewBox="0 0 12 4"><rect width="12" height="2.4" y="1" fill="#f0706a" /></svg>
                      </ActionDot>
                      Delete
                    </Action>
                    <Action $disabled>
                      <ActionDot $bg="#e3f3dc" $fg="#5aa832">
                        <svg width="12" height="10" viewBox="0 0 12 10" fill="none" stroke="#5aa832" strokeWidth="2"><path d="M1 5 L4.5 8.5 L11 1" /></svg>
                      </ActionDot>
                      Submit
                    </Action>
                    <Action $disabled>
                      <ActionDot $bg="#ececec" $fg="#444"><X size={14} strokeWidth={2.4} /></ActionDot>
                      Cancel
                    </Action>
                  </Actions>
                  <Stats>
                    <StatText $gap={0}>Max Returned:100</StatText>
                    <OkDot>
                      <svg width="12" height="10" viewBox="0 0 12 10" fill="none" stroke="#fff" strokeWidth="2"><path d="M1 5 L4.5 8.5 L11 1" /></svg>
                    </OkDot>
                    <StatText $gap={8}>Returned: 100</StatText>
                    <StatText $gap={19}>Elapsed Time: 2ms</StatText>
                    <StatText $gap={17}>Page 1</StatText>
                    <PageNav $gap={26}><FirstPage /></PageNav>
                    <PageNav $gap={21}><ChevronLeft size={30} strokeWidth={1.6} /></PageNav>
                    <PageNav $gap={18}><ChevronRight size={30} strokeWidth={1.6} /></PageNav>
                    <PageSize>100</PageSize>
                    <Chevron />
                  </Stats>
                </Footer>
              </Results>
            </RightColumn>
          </Body>
        </Sheet>
      </Frame>
    </>
  );
};

export default App;
